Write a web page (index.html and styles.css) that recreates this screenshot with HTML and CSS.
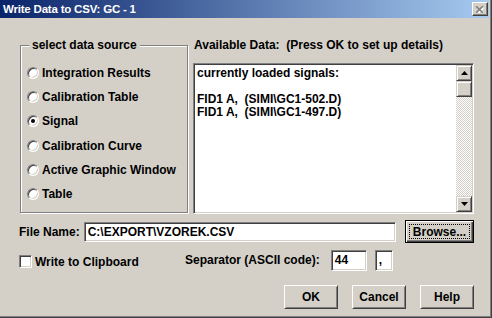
FILE: index.html
```html
<!DOCTYPE html>
<html lang="en">
<head>
  <meta charset="UTF-8" />
  <title>Write Data to CSV</title>
  <link rel="stylesheet" href="styles.css">
</head>
<body>
  <div class="window">
    <!-- Title bar -->
    <div class="titlebar">
      <span class="title">Write Data to CSV: GC - 1</span>
      <span class="close-box">
        <svg width="8" height="7" viewBox="0 0 8 7">
          <path d="M1 1 L7 7 M7 1 L1 7" stroke="#fff" stroke-width="1.6" transform="translate(0.6,0.6)"/>
          <path d="M0 0 L7 7 M7 0 L0 7" stroke="#808080" stroke-width="1.6"/>
        </svg>
      </span>
    </div>

    <div class="content">
      <div class="top-row">
        <!-- Data source group -->
        <fieldset class="group">
          <legend>select data source</legend>
          <div class="radio-row"><span class="radio"></span>Integration Results</div>
          <div class="radio-row"><span class="radio"></span>Calibration Table</div>
          <div class="radio-row"><span class="radio checked"></span>Signal</div>
          <div class="radio-row"><span class="radio"></span>Calibration Curve</div>
          <div class="radio-row"><span class="radio"></span>Active Graphic Window</div>
          <div class="radio-row"><span class="radio"></span>Table</div>
        </fieldset>

        <!-- Available data -->
        <div class="data-panel">
          <div class="data-label">Available Data:  (Press OK to set up details)</div>
          <div class="listbox">
            <div class="list-text">
              <div class="list-line">currently loaded signals:</div>
              <div class="list-line">&nbsp;</div>
              <div class="list-line">FID1 A,  (SIMI\GC1-502.D)</div>
              <div class="list-line">FID1 A,  (SIMI\GC1-497.D)</div>
            </div>
            <div class="scrollbar">
              <div class="sb-btn">
                <svg width="7" height="4" viewBox="0 0 7 4"><path d="M3.5 0 L7 4 L0 4 Z" fill="#000"/></svg>
              </div>
              <div class="sb-btn sb-thumb"></div>
              <div class="sb-track"></div>
              <div class="sb-btn">
                <svg width="7" height="4" viewBox="0 0 7 4"><path d="M0 0 L7 0 L3.5 4 Z" fill="#000"/></svg>
              </div>
            </div>
          </div>
        </div>
      </div>

      <!-- File name -->
      <div class="file-row">
        <span class="field-label">File Name:</span>
        <div class="textbox file-box">C:\EXPORT\VZOREK.CSV</div>
        <div class="btn btn-default"><span class="focus-rect">Browse...</span></div>
      </div>

      <!-- Options -->
      <div class="options-row">
        <div class="clip"><span class="checkbox"></span>Write to Clipboard</div>
        <span class="sep-label">Separator (ASCII code):</span>
        <div class="textbox sep-code">44</div>
        <div class="textbox sep-char">,</div>
      </div>

      <!-- Dialog buttons -->
      <div class="button-row">
        <div class="btn">OK</div>
        <div class="btn">Cancel</div>
        <div class="btn">Help</div>
      </div>
    </div>
  </div>
</body>
</html>
```

FILE: styles.css
```css
body {
  margin: 0;
  padding: 0;
  background-color: #d4d0c8;
  font-family: "Liberation Sans", Arial, sans-serif;
  font-size: 12px;
  font-weight: bold;
  color: #000;
}

/* Window frame */
.window {
  width: 492px;
  height: 318px;
  box-sizing: border-box;
  background-color: #d4d0c8;
  border-right: 1px solid #404040;
  border-bottom: 1px solid #404040;
  box-shadow: inset -1px -1px 0 #808080;
  padding-right: 2px;
  display: flex;
  flex-direction: column;
}

.titlebar {
  height: 18px;
  background: linear-gradient(to right, #0a246a, #a6caf0);
  display: flex;
  align-items: center;
  justify-content: space-between;
  padding: 0 1px 0 3px;
}

.title {
  color: #fff;
  font-size: 11.5px;
  letter-spacing: -0.2px;
}

.close-box {
  width: 16px;
  height: 14px;
  box-sizing: border-box;
  background-color: #d4d0c8;
  border: 1px solid;
  border-color: #fff #404040 #404040 #fff;
  box-shadow: inset -1px -1px 0 #808080;
  display: flex;
  align-items: center;
  justify-content: center;
}

.content {
  padding: 20px 15px 0 20px;
  display: flex;
  flex-direction: column;
}

/* Top section */
.top-row {
  display: flex;
  gap: 5px;
  height: 176px;
}

.group {
  width: 168px;
  box-sizing: border-box;
  margin: 0;
  padding: 9px 0 0 6px;
  border: 1px solid #808080;
  box-shadow: inset 1px 1px 0 #fff, 1px 1px 0 #fff;
  height: 175px;
}

.group legend {
  padding: 0 3px;
  margin-left: 2px;
  line-height: 14px;
  background-color: #d4d0c8;
}

.radio-row {
  height: 24.2px;
  display: flex;
  align-items: center;
  white-space: nowrap;
}

.radio {
  width: 12px;
  height: 12px;
  box-sizing: border-box;
  border-radius: 50%;
  background-color: #fff;
  border: 1px solid;
  border-color: #808080 #fff #fff #808080;
  box-shadow: inset 1px 1px 0 #404040, inset -1px -1px 0 #d4d0c8;
  margin-right: 3px;
  position: relative;
}

.radio.checked::after {
  content: "";
  position: absolute;
  left: 3px;
  top: 3px;
  width: 4px;
  height: 4px;
  border-radius: 50%;
  background-color: #000;
}

.data-panel {
  flex: 1;
  display: flex;
  flex-direction: column;
}

.data-label {
  white-space: pre;
  line-height: 14px;
  padding-left: 1px;
  margin-bottom: 11px;
}

.listbox {
  height: 151px;
  box-sizing: border-box;
  background-color: #fff;
  border: 1px solid;
  border-color: #808080 #fff #fff #808080;
  box-shadow: inset 1px 1px 0 #404040, inset -1px -1px 0 #d4d0c8;
  padding: 1px;
  display: flex;
}

.list-text {
  flex: 1;
  padding: 2px 0 0 2px;
  line-height: 13px;
}

.list-line {
  white-space: pre;
}

.scrollbar {
  width: 16px;
  display: flex;
  flex-direction: column;
}

.sb-btn {
  height: 16px;
  box-sizing: border-box;
  background-color: #d4d0c8;
  border: 1px solid;
  border-color: #d4d0c8 #404040 #404040 #d4d0c8;
  box-shadow: inset 1px 1px 0 #fff, inset -1px -1px 0 #808080;
  display: flex;
  align-items: center;
  justify-content: center;
}

.sb-track {
  flex: 1;
  background-color: #fff;
  background-image: repeating-conic-gradient(#d4d0c8 0 25%, #fff 0 50%);
  background-size: 2px 2px;
}

/* File name row */
.file-row {
  display: flex;
  align-items: center;
  margin-top: 6px;
  height: 23px;
}

.field-label {
  margin-left: -1px;
  margin-right: 4px;
}

.textbox {
  height: 21px;
  box-sizing: border-box;
  background-color: #fff;
  border: 1px solid;
  border-color: #808080 #fff #fff #808080;
  box-shadow: inset 1px 1px 0 #404040, inset -1px -1px 0 #d4d0c8;
  padding: 0 3px;
  line-height: 19px;
  white-space: nowrap;
}

.file-box {
  flex: 1;
  height: 20px;
  line-height: 18px;
  margin-right: 9px;
}

.btn {
  box-sizing: border-box;
  background-color: #d4d0c8;
  border: 1px solid;
  border-color: #fff #404040 #404040 #fff;
  box-shadow: inset 1px 1px 0 #d4d0c8, inset -1px -1px 0 #808080;
  display: flex;
  align-items: center;
  justify-content: center;
  width: 54px;
  height: 24px;
}

.btn-default {
  width: 69px;
  height: 23px;
  border: 1px solid #000;
  box-shadow: inset 1px 1px 0 #fff, inset -1px -1px 0 #404040, inset -2px -2px 0 #808080;
  padding: 3px;
}

.focus-rect {
  flex: 1;
  align-self: stretch;
  border: 1px dotted #000;
  display: flex;
  align-items: center;
  justify-content: center;
}

/* Options row */
.options-row {
  display: flex;
  align-items: center;
  margin-top: 7px;
  height: 21px;
}

.clip {
  width: 166px;
  margin-left: -1px;
  display: flex;
  align-items: center;
  margin-top: 2px;
}

.checkbox {
  width: 13px;
  height: 13px;
  box-sizing: border-box;
  background-color: #fff;
  border: 1px solid;
  border-color: #808080 #fff #fff #808080;
  box-shadow: inset 1px 1px 0 #404040, inset -1px -1px 0 #d4d0c8;
  margin-right: 3px;
}

.sep-label {
  margin-right: 11px;
  margin-top: -2px;
}

.sep-code {
  width: 36px;
  margin-right: 8px;
}

.sep-char {
  width: 18px;
}

/* Dialog buttons */
.button-row {
  display: flex;
  justify-content: flex-end;
  gap: 14px;
  margin-top: 14px;
}
```
